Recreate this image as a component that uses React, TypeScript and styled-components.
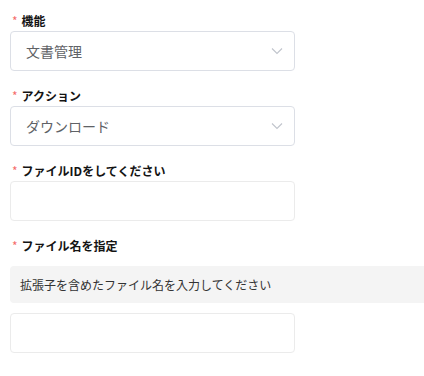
import React from 'react';
import styled, { createGlobalStyle } from 'styled-components';

const GlobalStyle = createGlobalStyle`
    body {
        margin: 0;
        background: #fff;
        font-family: 'Noto Sans CJK JP', 'Noto Sans', sans-serif;
    }
`;

const Form = styled.div`
    padding: 11px 0 0 10px;
    width: 414px;
`;

const Field = styled.div`
    margin-bottom: 15px;
`;

const Label = styled.div`
    height: 20px;
    line-height: 20px;
    padding-left: 2px;
    font-size: 12px;
    font-weight: bold;
    color: #141414;
    display: flex;
    align-items: center;
`;

const Required = styled.span`
    color: #f56c6c;
    font-weight: normal;
    margin-right: 4px;
    font-size: 12px;
`;

const Box = styled.div<{ $select?: boolean }>`
    box-sizing: border-box;
    width: 285px;
    height: 40px;
    border: 1px solid ${(p) => (p.$select ? '#dcdfe6' : '#ebebeb')};
    border-radius: 4px;
    display: flex;
    align-items: center;
    justify-content: space-between;
    padding: 0 11px 0 15px;
    font-size: 14px;
    color: #606266;
`;

const Chevron = styled.svg`
    width: 12px;
    height: 8px;
`;

const Hint = styled.div`
    margin-top: 10px;
    height: 37px;
    display: flex;
    align-items: center;
    padding-left: 10px;
    background: #f4f4f4;
    border-radius: 4px 0 0 4px;
    font-size: 12px;
    color: #333;
`;

const HintInput = styled(Box)`
    margin-top: 10px;
`;

const Arrow = () => (
    <Chevron viewBox="0 0 12 8">
        <path d="M1 1.5 L6 6.5 L11 1.5" fill="none" stroke="#c0c4cc" strokeWidth="1.1" />
    </Chevron>
);

const App: React.FC = () => {
    return (
        <>
            <GlobalStyle />
            <Form>
                <Field>
                    <Label>
                        <Required>*</Required>機能
                    </Label>
                    <Box $select>
                        <span>文書管理</span>
                        <Arrow />
                    </Box>
                </Field>
                <Field>
                    <Label>
                        <Required>*</Required>アクション
                    </Label>
                    <Box $select>
                        <span>ダウンロード</span>
                        <Arrow />
                    </Box>
                </Field>
                <Field>
                    <Label>
                        <Required>*</Required>ファイルIDをしてください
                    </Label>
                    <Box />
                </Field>
                <Field>
                    <Label>
                        <Required>*</Required>ファイル名を指定
                    </Label>
                    <Hint>拡張子を含めたファイル名を入力してください</Hint>
                    <HintInput />
                </Field>
            </Form>
        </>
    );
};

export default App;
